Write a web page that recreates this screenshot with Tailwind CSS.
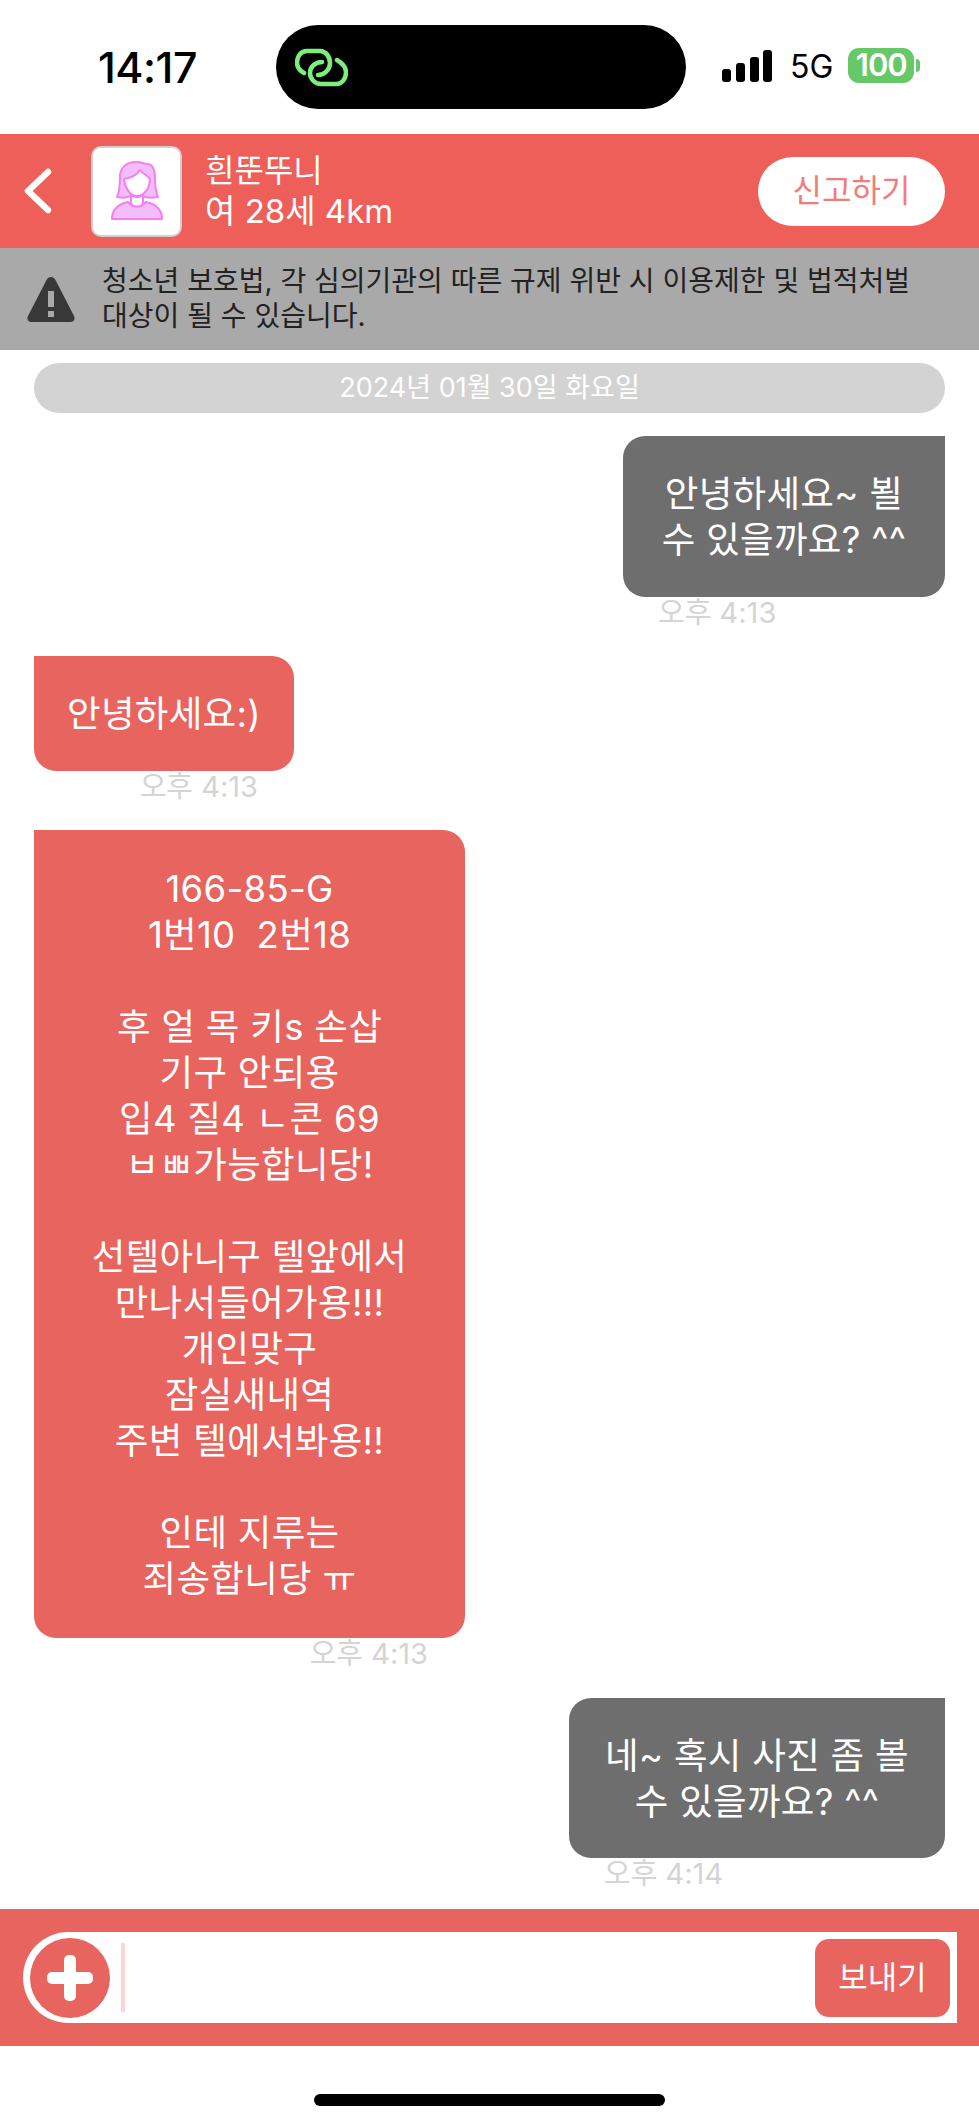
<!DOCTYPE html>
<html lang="ko">
<head>
    <meta charset="UTF-8">
    <meta name="viewport" content="width=device-width, initial-scale=1.0">
    <title>채팅</title>
    <script src="https://cdn.jsdelivr.net/npm/@tailwindcss/browser@4"></script>
</head>
<body class="bg-white font-['Inter','Noto_Sans_CJK_KR',sans-serif]">
    <div class="flex h-[2124px] w-[979px] flex-col overflow-hidden">
        <!-- status bar -->
        <div class="flex h-[134px] shrink-0 items-start">
            <div class="mt-[44px] ml-[98px] w-[178px] text-[43px] leading-[46px] font-medium tracking-[-0.5px] text-black">14:17</div>
            <div class="mt-[25px] flex h-[84px] w-[410px] items-center rounded-full bg-black pl-[19px]">
                <svg class="h-[41px] w-[53px]" viewBox="0 0 53 41" fill="none" stroke="#7cee7c" stroke-width="4.5" stroke-linecap="round">
                    <path d="M9 26C4 23 2 19 2 16C2 9 6 4 12 4H25C31 4 35 10 35 16C35 23 29 28 23 28"/>
                    <path d="M42 13C47 16 51 20 51 25C51 32 47 37 41 37H26C20 37 15 32 15 26C15 20 20 15 27 15"/>
                </svg>
            </div>
            <svg class="mt-[50px] ml-[36px] h-[32px] w-[50px]" viewBox="0 0 50 32" fill="#000">
                <rect x="0" y="19" width="9" height="13" rx="3"/>
                <rect x="14" y="13" width="9" height="19" rx="3"/>
                <rect x="28" y="7" width="9" height="25" rx="3"/>
                <rect x="41" y="0" width="9" height="32" rx="3"/>
            </svg>
            <div class="mt-[48px] ml-[18px] text-[32px] leading-[38px] text-black">5G</div>
            <div class="mt-[48px] ml-[15px] flex h-[35px] w-[66px] items-center justify-center rounded-[11px] bg-[#67c868] text-[31px] font-semibold tracking-[-1px] text-white">100</div>
            <div class="mt-[59px] ml-[2px] h-[13px] w-[4px] rounded-r-full bg-[#67c868]"></div>
        </div>

        <!-- header -->
        <div class="flex h-[114px] shrink-0 items-center bg-[#ee5f5a] pr-[34px] pl-[24px]">
            <svg class="h-[46px] w-[28px]" viewBox="0 0 28 46" fill="none" stroke="#fff" stroke-width="6.5" stroke-linecap="round" stroke-linejoin="round">
                <path d="M24 4L4 23L24 42"/>
            </svg>
            <div class="ml-[39px] flex h-[91px] w-[91px] items-center justify-center rounded-[10px] border-2 border-[#cfcfcf] bg-white">
                <svg class="h-[60px] w-[52px]" viewBox="0 0 52 60" fill="#f3bdfa" stroke="#f57ff5" stroke-width="2" stroke-linejoin="round">
                    <path d="M1 58C1 48 8 43 17 41C22 47 30 47 35 41C44 43 51 48 51 58Z"/>
                    <path d="M6 36C9 30 9 22 9 14C10 6 16 1 25 1C31 1 33 3 36 3C42 3 44 9 44 18C44 26 45 31 47 36C42 37 36 37 31 35H20C15 37 10 37 6 36Z"/>
                    <path fill="#fff" d="M13 18C19 17 26 14 29 9C32 13 37 15 39 18C39 27 33 35 26 35C19 35 14 27 13 18Z"/>
                    <path fill="#fff" d="M20 34C24 37 28 37 32 34V41C32 47 20 47 20 41Z"/>
                </svg>
            </div>
            <div class="ml-[23px] leading-[40px] text-white">
                <div class="text-[32px]">흰뚠뚜니</div>
                <div class="text-[33px]">여 28세 4km</div>
            </div>
            <div class="ml-auto flex h-[69px] w-[187px] items-center justify-center rounded-full bg-white text-[32px] text-[#f17d79]">신고하기</div>
        </div>

        <!-- notice -->
        <div class="flex h-[102px] shrink-0 items-center bg-[#a9a9a9] pl-[27px]">
            <svg class="h-[48px] w-[48px] shrink-0" viewBox="0 0 48 48">
                <path fill="#383838" fill-rule="evenodd" d="M24 2C26 2 27.500 3 28.500 5L47 41C48.500 44 47 47 43.500 47H4.500C1 47 -0.500 44 1 41L19.500 5C20.500 3 22 2 24 2ZM21 16V32H27V16ZM21 36V42H27V36Z"/>
            </svg>
            <div class="ml-[27px] text-[28px] leading-[35px] text-[#222]">청소년 보호법, 각 심의기관의 따른 규제 위반 시 이용제한 및 법적처벌<br>대상이 될 수 있습니다.</div>
        </div>

        <!-- messages -->
        <div class="flex flex-1 flex-col px-[34px]">
            <div class="mt-[13px] flex h-[50px] shrink-0 items-center justify-center rounded-full bg-[#d3d3d3] text-[27px] text-white">2024년 01월 30일 화요일</div>

            <div class="mt-[23px] ml-auto w-[322px]">
                <div class="rounded-[22px] rounded-tr-none bg-[#6e6e6e] pt-[35px] pb-[34px] text-center text-[36.500px] leading-[46px] tracking-[0.3px] text-white">안녕하세요~ 뵐<br>수 있을까요? ^^</div>
                <div class="pl-[35px] text-[29px] leading-[32px] text-[#d4d4d4]">오후 4:13</div>
            </div>

            <div class="mt-[27px] w-[260px]">
                <div class="rounded-[22px] rounded-tl-none bg-[#e8645f] pt-[35px] pb-[34px] text-center text-[36.500px] leading-[46px] tracking-[0.3px] text-white">안녕하세요:)</div>
                <div class="pr-[36px] text-right text-[29px] leading-[32px] text-[#d4d4d4]">오후 4:13</div>
            </div>

            <div class="mt-[27px] w-[431px]">
                <div class="rounded-[22px] rounded-tl-none bg-[#e8645f] py-[36px] text-center text-[36.500px] leading-[46px] tracking-[0.3px] whitespace-pre text-white">166-85-G<br>1번10  2번18<br><br>후 얼 목 키s 손삽<br>기구 안되용<br>입4 질4 ㄴ콘 69<br>ㅂㅃ가능합니당!<br><br>선텔아니구 텔앞에서<br>만나서들어가용!!!<br>개인맞구<br>잠실새내역<br>주변 텔에서봐용!!<br><br>인테 지루는<br>죄송합니당 ㅠ</div>
                <div class="pr-[37px] text-right text-[29px] leading-[32px] text-[#d4d4d4]">오후 4:13</div>
            </div>

            <div class="mt-[28px] ml-auto w-[376px]">
                <div class="rounded-[22px] rounded-tr-none bg-[#6e6e6e] pt-[35px] pb-[33px] text-center text-[36.500px] leading-[46px] tracking-[0.3px] text-white">네~ 혹시 사진 좀 볼<br>수 있을까요? ^^</div>
                <div class="pl-[35px] text-[29px] leading-[32px] text-[#d4d4d4]">오후 4:14</div>
            </div>
        </div>

        <!-- input bar -->
        <div class="flex h-[137px] shrink-0 items-center bg-[#e8645f] pr-[22px] pl-[23px]">
            <div class="flex h-[91px] w-full items-center rounded-l-full rounded-r-[12px] bg-white pr-[7px] pl-[7px]">
                <div class="flex h-[80px] w-[80px] shrink-0 items-center justify-center rounded-full bg-[#e8645f]">
                    <svg class="h-[46px] w-[46px]" viewBox="0 0 46 46" fill="#fff">
                        <rect x="17" y="0" width="12" height="46" rx="5"/>
                        <rect x="0" y="17" width="46" height="12" rx="5"/>
                    </svg>
                </div>
                <div class="ml-[11px] h-[69px] w-[4px] bg-[#fcd5d5]"></div>
                <div class="ml-auto flex h-[78px] w-[135px] items-center justify-center rounded-[14px] bg-[#e8645f] text-[32px] text-white">보내기</div>
            </div>
        </div>

        <!-- home indicator -->
        <div class="flex h-[78px] shrink-0 items-start justify-center pt-[48px]">
            <div class="h-[12px] w-[351px] rounded-full bg-black"></div>
        </div>
    </div>
</body>
</html>
